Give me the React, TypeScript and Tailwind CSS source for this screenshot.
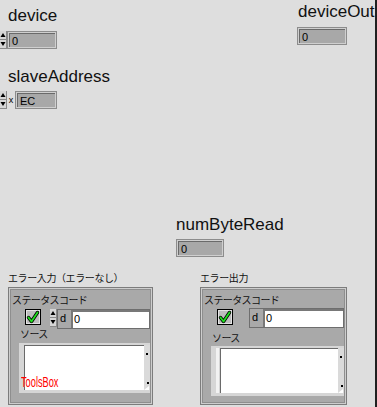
import React from "react";

const jp = "font-['Noto_Sans_CJK_JP',sans-serif]";

function Spinner() {
  return (
    <svg width="7" height="18" viewBox="0 0 7 18" className="shrink-0">
      <rect x="0" y="0" width="7" height="18" fill="#8a8a8a" />
      <rect x="0" y="0" width="6" height="8" fill="#d6d6d6" />
      <rect x="0" y="9" width="6" height="8" fill="#d6d6d6" />
      <path d="M3 2 L5.5 6 L0.5 6 Z" fill="#000" />
      <path d="M0.5 11 L5.5 11 L3 15 Z" fill="#000" />
    </svg>
  );
}

function NumBox({ className, children }: { className: string; children: React.ReactNode }) {
  return (
    <div className={`h-[18px] border border-[#8c8c8c] bg-[#cfcfcf] p-px ${className}`}>
      <div className="h-full border-t border-l border-[#6a6a6a] bg-[#a8a8a8] pl-[2px] text-[11px] leading-[14px] text-black">
        {children}
      </div>
    </div>
  );
}

function Label({ className, children }: { className?: string; children: React.ReactNode }) {
  return <div className={`text-[17px] leading-[20px] text-[#111] ${className ?? ""}`}>{children}</div>;
}

function Check() {
  return (
    <svg width="16" height="16" viewBox="0 0 16 16" className="shrink-0">
      <rect x="0.5" y="0.5" width="15" height="15" fill="#bdbdbd" stroke="#000" />
      <rect x="1.5" y="1.5" width="13" height="13" fill="none" stroke="#e4e4e4" />
      <path d="M3.5 8.5 L6.5 12.5 L12.5 3.5" fill="none" stroke="#000" strokeWidth="3.4" strokeLinecap="round" strokeLinejoin="round" />
      <path d="M3.5 8.5 L6.5 12.5 L12.5 3.5" fill="none" stroke="#1ee01e" strokeWidth="1.8" strokeLinecap="round" strokeLinejoin="round" />
    </svg>
  );
}

function ErrorCluster({ title, control }: { title: string; control: boolean }) {
  return (
    <div className={control ? "w-[145px]" : "w-[147px]"}>
      <div className={`${jp} h-[13px] whitespace-nowrap text-[10px] leading-[13px] tracking-[-0.4px] text-[#111]`}>{title}</div>
      <div className="mt-[3px] h-[118px] border border-[#7c7c7c] bg-[#cdcdcd] p-px">
        <div className="relative h-full border border-[#8e8e8e] bg-[#a9a9a9]">
          <div className={`${jp} pl-px pt-[3px] text-[10px] leading-[13px] tracking-[-0.6px] text-[#111]`}>ステータスコード</div>
          <div className={`flex items-start ${control ? "mt-[3px]" : "mt-[2px]"}`}>
            <div className={`ml-[14px] ${control ? "" : "mt-px"}`}>
              <Check />
            </div>
            {control ? (
              <div className="ml-[9px]">
                <Spinner />
              </div>
            ) : (
              <div className="w-[16px]" />
            )}
            <div className="flex h-[20px] flex-1 border border-[#6e6e6e] bg-[#a9a9a9]">
              <span className="w-[13px] pl-[2px] text-[11px] leading-[17px] text-black">d</span>
              <div className="flex-1 border-t-2 border-l-2 border-[#787878] bg-white pl-[1px] text-[11px] leading-[15px] text-black">
                0
              </div>
            </div>
          </div>
          <div className={`${jp} pl-[9px] text-[10px] leading-[13px] tracking-[-0.6px] text-[#111] ${control ? "mt-[-2px]" : "mt-[3px]"}`}>
            ソース
          </div>
          <div className={`ml-[8px] flex h-[50px] bg-[#d6d6d6] pl-[5px] pt-[2px] pb-[3px] ${control ? "mt-[3px]" : "mt-[2px]"}`}>
            {!control && <div className="mr-[1px] w-[3px] bg-[#f2f2f2]" />}
            <div className="flex-1 border-t border-l border-[#6a6a6a] bg-white" />
            <div className="relative w-[6px] bg-[#dadada]">
              <div className="absolute left-[2px] top-[8px] h-[2px] w-[2px] bg-black" />
              <div className="absolute left-[3px] bottom-[6px] h-[2px] w-[2px] bg-black" />
              <div className="absolute left-0 bottom-0 h-0 w-0 border-b-[4px] border-l-[5px] border-b-white border-l-transparent" />
            </div>
          </div>
          {control && (
            <div className="absolute left-[10px] top-[85px] origin-left scale-x-[0.66] text-[14px] leading-[14px] text-[#ff0000] font-['Liberation_Sans',sans-serif]">
              ToolsBox
            </div>
          )}
        </div>
      </div>
    </div>
  );
}

export default function App() {
  return (
    <div className="h-[407px] w-[377px] overflow-hidden border-r-2 border-[#202020] bg-[#dedede] font-['Liberation_Sans',sans-serif]">
      <div className="flex">
        <div className="w-[297px] pt-[6px]">
          <Label className="pl-[8px]">device</Label>
          <div className="mt-[5px] flex">
            <Spinner />
            <NumBox className="w-[50px]">0</NumBox>
          </div>
        </div>
        <div className="pt-[2px]">
          <Label className="pl-px">deviceOut</Label>
          <NumBox className="mt-[5px] w-[50px]">0</NumBox>
        </div>
      </div>

      <div className="mt-[18px]">
        <Label className="pl-[8px]">slaveAddress</Label>
        <div className="mt-[4px] flex">
          <Spinner />
          <span className="w-[8px] text-center text-[9px] leading-[18px] text-black">x</span>
          <NumBox className="w-[42px]">EC</NumBox>
        </div>
      </div>

      <div className="mt-[106px] pl-[176px]">
        <Label>numByteRead</Label>
        <NumBox className="mt-[4px] w-[48px]">0</NumBox>
      </div>

      <div className="mt-[14px] flex">
        <div className="ml-[8px]">
          <ErrorCluster title="エラー入力（エラーなし）" control />
        </div>
        <div className="ml-[47px]">
          <ErrorCluster title="エラー出力" control={false} />
        </div>
      </div>
    </div>
  );
}
